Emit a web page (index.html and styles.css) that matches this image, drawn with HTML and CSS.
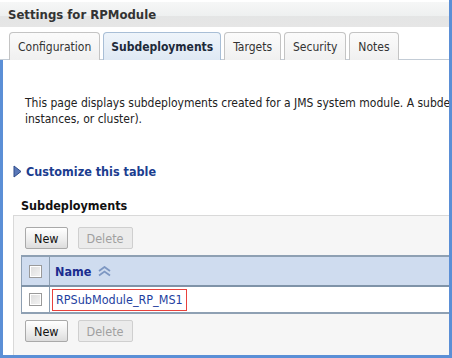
FILE: index.html
```html
<!DOCTYPE html>
<html lang="en">
<head>
    <meta charset="UTF-8">
    <title>Settings for RPModule</title>
    <link rel="stylesheet" href="styles.css">
</head>
<body>
    <div class="frame">
        <div class="titlebar">Settings for RPModule</div>

        <div class="tabs">
            <div class="tab">Configuration</div>
            <div class="tab active">Subdeployments</div>
            <div class="tab">Targets</div>
            <div class="tab">Security</div>
            <div class="tab">Notes</div>
        </div>

        <div class="content">
            <p class="desc">
                <span class="line">This page displays subdeployments created for a JMS system module. A subdeployment is a mechanism by which</span><br>
                instances, or cluster).
            </p>

            <a class="customize" href="#">
                <svg width="9" height="13" viewBox="0 0 9 13">
                    <path d="M1 1 L8 6.5 L1 12 Z" fill="#5a78b8" stroke="#2c4a8a" stroke-width="1"/>
                </svg>
                Customize this table
            </a>

            <h2 class="section-title">Subdeployments</h2>

            <div class="tablebox">
                <div class="toolbar">
                    <button class="btn">New</button>
                    <button class="btn" disabled>Delete</button>
                </div>

                <table class="grid">
                    <tr class="head">
                        <th class="check"><span class="cb"></span></th>
                        <th class="name">
                            Name
                            <svg class="sort" width="15" height="11" viewBox="0 0 15 11">
                                <path d="M2 5 L7.5 1 L13 5 M2 9.5 L7.5 5.5 L13 9.5" fill="none" stroke="#7d97c2" stroke-width="1.8"/>
                            </svg>
                        </th>
                    </tr>
                    <tr class="row">
                        <td class="check"><span class="cb"></span></td>
                        <td class="name"><a class="hl" href="#">RPSubModule_RP_MS1</a></td>
                    </tr>
                </table>

                <div class="toolbar">
                    <button class="btn">New</button>
                    <button class="btn" disabled>Delete</button>
                </div>
            </div>
        </div>
    </div>
</body>
</html>
```

FILE: styles.css
```css
* {
    margin: 0;
    padding: 0;
    box-sizing: border-box;
}

body {
    font-family: "DejaVu Sans", Tahoma, sans-serif;
    font-stretch: condensed;
    font-size: 12px;
    color: #222;
    background: #fff;
    width: 452px;
    height: 358px;
    overflow: hidden;
}

.frame {
    width: 452px;
    height: 358px;
    border-right: 3px solid #5b8fd6;
    border-bottom: 3px solid #5b8fd6;
    padding-top: 2px;
    overflow: hidden;
}

.titlebar {
    height: 25px;
    padding-left: 8px;
    line-height: 26px;
    font-size: 13px;
    font-weight: bold;
    color: #333;
    background: linear-gradient(#f6f7f7, #eef0f0 55%, #e4e5e5 56%, #e6e6e6);
}

.tabs {
    display: flex;
    gap: 3px;
    height: 33px;
    padding: 5px 0 0 9px;
    border-bottom: 1px solid #c3ccd6;
}

.tab {
    height: 28px;
    padding: 0 8px;
    line-height: 28px;
    color: #333;
    background: linear-gradient(#fbfbfb, #f0f0f0);
    border: 1px solid #c4c4c4;
    border-bottom: none;
    border-radius: 4px 4px 0 0;
}

.tab.active {
    font-weight: bold;
    color: #1d2a3a;
    background: linear-gradient(#eef4fa, #dfe9f4);
    border-color: #a8bed6;
    padding: 0 7px;
}

.content {
    border-left: 3px solid #5b8fd6;
    height: 300px;
    padding-top: 35px;
}

.desc {
    padding-left: 22px;
    line-height: 16px;
    white-space: nowrap;
    color: #222;
}

.customize {
    display: flex;
    align-items: center;
    gap: 4px;
    margin: 37px 0 0 10px;
    font-size: 12.5px;
    font-weight: bold;
    color: #1b3d8f;
    text-decoration: none;
}

.section-title {
    margin: 19px 0 0 18px;
    font-size: 12.5px;
    font-weight: bold;
    color: #111;
}

.tablebox {
    margin: 2px 0 0 10px;
    width: 460px;
    height: 140px;
    background: #f6f6f6;
    border-top: 1px solid #d9d9d9;
    border-left: 1px solid #d9d9d9;
}

.toolbar {
    display: flex;
    gap: 10px;
    padding: 11px 0 0 11px;
    height: 39px;
}

.tablebox .toolbar:last-child {
    padding-top: 6px;
}

.btn {
    height: 22px;
    padding: 0 8px;
    font-family: inherit;
    font-stretch: condensed;
    font-size: 12.5px;
    color: #111;
    background: linear-gradient(#ffffff, #ececec 60%, #dcdcdc);
    border: 1px solid #a9a9a9;
    border-radius: 2px;
}

.btn:disabled {
    color: #a0a0a0;
    background: #ebebeb;
    border-color: #cfcfcf;
}

.grid {
    margin-left: 7px;
    width: 432px;
    border-collapse: collapse;
    border-left: 1px solid #8d9fb2;
}

.grid th,
.grid td {
    text-align: left;
    padding: 0;
}

.head {
    height: 30px;
    background: #cfdcef;
    border-top: 2px solid #8ea0b3;
    border-bottom: 2px solid #7f93a8;
}

.row {
    height: 27px;
    background: #fff;
    border-bottom: 2px solid #8ea0b3;
}

.check {
    width: 28px;
    border-right: 1px solid #8d9fb2;
    text-align: center !important;
}

.cb {
    display: inline-block;
    width: 13px;
    height: 13px;
    margin-top: 3px;
    background: linear-gradient(135deg, #dcdcdc, #f4f4f4);
    border: 1px solid #9a9a9a;
    box-shadow: inset 0 0 0 1px #fff;
}

.name {
    padding-left: 5px !important;
}

.head .name {
    font-size: 12.5px;
    font-weight: bold;
    color: #1b2d8f;
}

.sort {
    vertical-align: -1px;
    margin-left: 2px;
}

.hl {
    display: inline-block;
    padding: 2px 3px 3px 3px;
    margin-left: -3px;
    font-size: 12.5px;
    color: #1f3f9f;
    text-decoration: none;
    border: 1px solid #e8413c;
}
```
